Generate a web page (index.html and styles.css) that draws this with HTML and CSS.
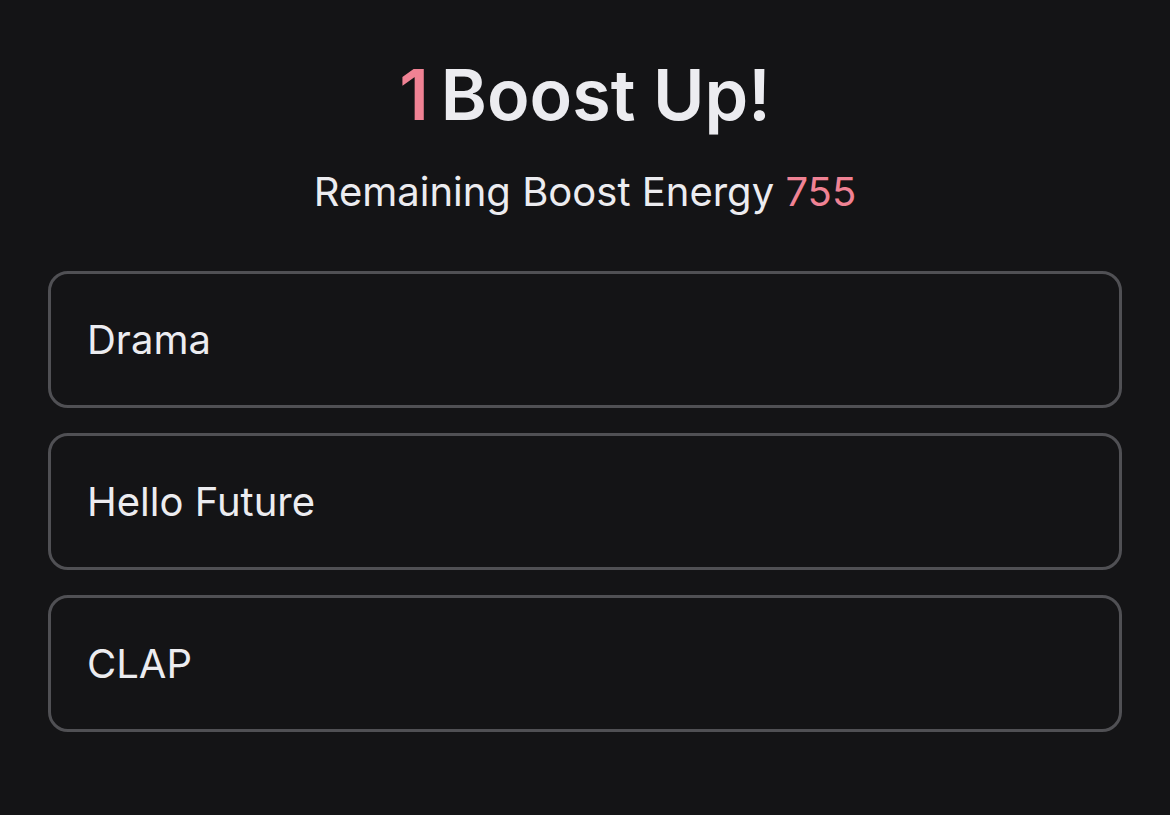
FILE: index.html
```html
<!DOCTYPE html>
<html>
<head>
<meta charset="utf-8">
<link rel="stylesheet" href="styles.css">
</head>
<body>
<main class="page">
  <h1 class="title"><span class="count">1</span>Boost Up!</h1>
  <p class="subtitle">Remaining Boost Energy <span class="energy">755</span></p>
  <ul class="list">
    <li class="item">Drama</li>
    <li class="item">Hello Future</li>
    <li class="item">CLAP</li>
  </ul>
</main>
</body>
</html>
```
FILE: styles.css
```css
html, body {
  margin: 0;
  padding: 0;
  background: #141416;
}
body {
  font-family: Inter, "Noto Sans", sans-serif;
  color: #ececf0;
  width: 1170px;
  height: 815px;
  overflow: hidden;
}
.page {
  display: flex;
  flex-direction: column;
  align-items: center;
  padding: 50px 48px 0;
}
.title {
  margin: 0;
  font-size: 70px;
  font-weight: 600;
  line-height: 90px;
}
.count {
  color: #f08294;
  margin-right: 12px;
}
.subtitle {
  margin: 26px 0 0;
  font-size: 40px;
  line-height: 52px;
  font-weight: 400;
}
.energy {
  color: #f08294;
}
.list {
  list-style: none;
  margin: 53px 0 0;
  padding: 0;
  width: 100%;
  display: flex;
  flex-direction: column;
  gap: 25px;
}
.item {
  box-sizing: border-box;
  height: 137px;
  border: 3px solid #505054;
  border-radius: 20px;
  padding: 0 36px;
  display: flex;
  align-items: center;
  font-size: 40px;
}
```
